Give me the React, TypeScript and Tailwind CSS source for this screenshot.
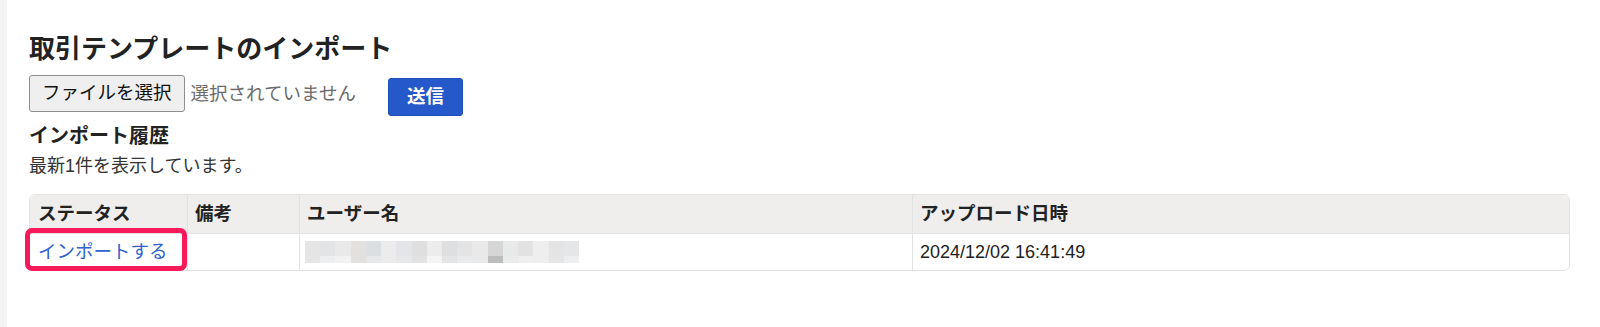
import React from "react";

const font = "font-['Liberation_Sans','Noto_Sans_CJK_JP',sans-serif]";

// pixelated (mosaic) user name, top and bottom block rows
const mosaicTop = [
  "bg-[#e5e5e5]", "bg-[#e3e4e6]", "bg-[#e9e9e9]", "bg-[#e2e1df]", "bg-[#dcdfe2]",
  "bg-[#ececec]", "bg-[#e3e5e8]", "bg-[#dfdfdf]", "bg-[#ececec]", "bg-[#dddfe1]",
  "bg-[#e4e4e4]", "bg-[#e9e9e9]", "bg-[#d6d6d6]", "bg-[#e8eaea]", "bg-[#e2e2e2]",
  "bg-[#eeeeee]", "bg-[#e4e4e4]", "bg-[#e4e6e8]",
];
const mosaicBottom = [
  "bg-[#e6e6e6]", "bg-[#eceef0]", "bg-[#f2f2f2]", "bg-[#e2e1df]", "bg-[#e6e8ea]",
  "bg-[#ececec]", "bg-[#e6e8ea]", "bg-[#e2e2e2]", "bg-[#f4f4f4]", "bg-[#e4e5e6]",
  "bg-[#eaebec]", "bg-[#e9e9e9]", "bg-[#bdbdbd]", "bg-[#eaecec]", "bg-[#efefef]",
  "bg-[#eeeeee]", "bg-[#e6e6e6]", "bg-[#eceef0]",
];

const Mosaic = () => (
  <div className="flex flex-col w-[274px]">
    <div className="flex h-[15px]">
      {mosaicTop.map((c, i) => (
        <div key={i} className={`flex-1 ${c}`} />
      ))}
    </div>
    <div className="flex h-[7px]">
      {mosaicBottom.map((c, i) => (
        <div key={i} className={`flex-1 ${c}`} />
      ))}
    </div>
  </div>
);

export default function App() {
  return (
    <div className={`flex min-h-[327px] bg-white ${font}`}>
      <div className="w-[7px] shrink-0 bg-[#f4f4f4]" />
      <div className="flex flex-col pl-[22px] pt-[31px]">
        <h1 className="text-[26px] leading-[36px] font-bold text-[#222]">
          取引テンプレートのインポート
        </h1>

        <div className="flex items-start mt-[8px]">
          <button className="h-[37px] px-[12px] text-[18.5px] leading-none text-[#111] bg-[#efefef] border border-[#8f8f8f] rounded-[3px]">
            ファイルを選択
          </button>
          <span className="ml-[6px] mt-[8px] text-[18.5px] leading-[22px] text-[#6b6b6b]">
            選択されていません
          </span>
          <button className="ml-[32px] mt-[3px] h-[38px] w-[75px] text-[18.5px] leading-none font-bold text-white bg-[#2558c8] border border-[#1f4fb8] rounded-[3px]">
            送信
          </button>
        </div>

        <h2 className="mt-[6px] text-[20px] leading-[28px] font-bold text-[#222]">
          インポート履歴
        </h2>
        <p className="mt-[3px] text-[18px] leading-[26px] text-[#333]">
          最新1件を表示しています。
        </p>

        <div className="mt-[15px] w-[1541px] border border-[#e2e2e2] rounded-[6px]">
          <div className="grid grid-cols-[157px_112px_613px_1fr] bg-[#efeeed] rounded-t-[6px] border-b border-[#e2e2e2] text-[18.5px] font-bold text-[#222]">
            <div className="h-[38px] flex items-center px-2">ステータス</div>
            <div className="h-[38px] flex items-center px-[7px] border-l border-[#e2e2e2]">備考</div>
            <div className="h-[38px] flex items-center px-[7px] border-l border-[#e2e2e2]">ユーザー名</div>
            <div className="h-[38px] flex items-center px-[7px] border-l border-[#e2e2e2]">アップロード日時</div>
          </div>
          <div className="grid grid-cols-[157px_112px_613px_1fr] bg-white rounded-b-[6px] text-[18px] text-[#222]">
            <div className="relative h-[36px] flex items-center px-2">
              <a href="#" className="text-[18.5px] text-[#2f62d1]">インポートする</a>
              <div className="absolute -left-[5px] -top-[6px] right-0 -bottom-[1px] border-[5px] border-[#f7195a] rounded-[7px]" />
            </div>
            <div className="h-[36px] border-l border-[#e2e2e2]" />
            <div className="h-[36px] flex items-center pl-[5px] border-l border-[#e2e2e2]">
              <Mosaic />
            </div>
            <div className="h-[36px] flex items-center px-[7px] border-l border-[#e2e2e2]">
              2024/12/02 16:41:49
            </div>
          </div>
        </div>
      </div>
    </div>
  );
}
